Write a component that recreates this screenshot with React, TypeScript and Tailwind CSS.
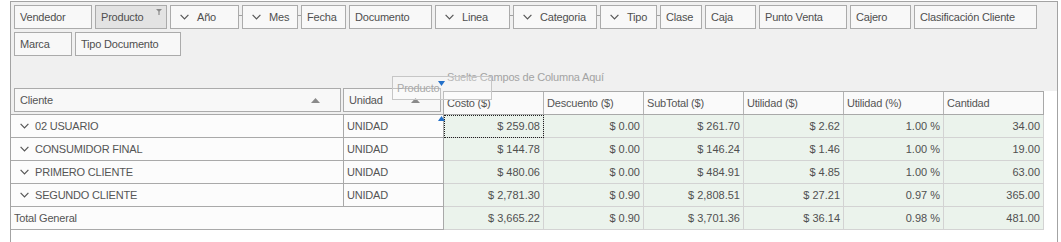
import React from "react";

const Chevron = () => (
  <svg width="9" height="6" viewBox="0 0 9 6" className="shrink-0">
    <path d="M0.6 0.9 L4.5 4.8 L8.4 0.9" fill="none" stroke="#555555" strokeWidth="1.2" />
  </svg>
);

const SortUp = () => (
  <svg width="9" height="5" viewBox="0 0 9 5" className="shrink-0">
    <polygon points="0,5 9,5 4.5,0" fill="#8a8a8a" />
  </svg>
);

type ChipDef = { label: string; cls: string; chev?: boolean; active?: boolean; after?: "sp" | "conn" | "none" };

const row1: ChipDef[] = [
  { label: "Vendedor", cls: "w-[78px]", after: "sp" },
  { label: "Producto", cls: "w-[72px]", active: true, after: "sp" },
  { label: "Año", cls: "w-[69px]", chev: true, after: "conn" },
  { label: "Mes", cls: "w-[56px]", chev: true, after: "conn" },
  { label: "Fecha", cls: "w-[45px]", after: "sp" },
  { label: "Documento", cls: "w-[83px]", after: "sp" },
  { label: "Linea", cls: "w-[75px]", chev: true, after: "conn" },
  { label: "Categoria", cls: "w-[84px]", chev: true, after: "conn" },
  { label: "Tipo", cls: "w-[57px]", chev: true, after: "conn" },
  { label: "Clase", cls: "w-[42px]", after: "sp" },
  { label: "Caja", cls: "w-[51px]", after: "sp" },
  { label: "Punto Venta", cls: "w-[88px]", after: "sp" },
  { label: "Cajero", cls: "w-[61px]", after: "sp" },
  { label: "Clasificación Cliente", cls: "w-[123px]", after: "none" },
];

const row2: ChipDef[] = [
  { label: "Marca", cls: "w-[58px]", after: "sp" },
  { label: "Tipo Documento", cls: "w-[106px]", after: "none" },
];

function Chip({ c }: { c: ChipDef }) {
  return (
    <>
      <div
        className={
          "relative h-[24px] shrink-0 border border-[#ababab] flex items-center text-[#4f4f4f] tracking-[-0.2px] " +
          (c.active ? "bg-[#e3e3e3] " : "bg-[#f8f8f8] ") +
          (c.chev ? "pl-[9px] gap-[8px] " : "pl-[5px] ") +
          c.cls
        }
      >
        {c.chev && <Chevron />}
        <span className="whitespace-nowrap">{c.label}</span>
        {c.active && (
          <svg width="6" height="6" viewBox="0 0 6 6" className="absolute top-[3px] right-[4px]">
            <polygon points="0,0 6,0 3.6,2.6 3.6,6 2.4,6 2.4,2.6" fill="#8a8a8a" />
          </svg>
        )}
      </div>
      {c.after === "sp" && <div className="w-[3px] shrink-0" />}
      {c.after === "conn" && (
        <div className="w-[3px] shrink-0 pt-[10px]">
          <div className="h-px bg-[#a0a0a0]" />
        </div>
      )}
    </>
  );
}

const cols = ["Costo ($)", "Descuento ($)", "SubTotal ($)", "Utilidad ($)", "Utilidad (%)", "Cantidad"];

const rows = [
  { name: "02 USUARIO", vals: ["$ 259.08", "$ 0.00", "$ 261.70", "$ 2.62", "1.00 %", "34.00"] },
  { name: "CONSUMIDOR FINAL", vals: ["$ 144.78", "$ 0.00", "$ 146.24", "$ 1.46", "1.00 %", "19.00"] },
  { name: "PRIMERO CLIENTE", vals: ["$ 480.06", "$ 0.00", "$ 484.91", "$ 4.85", "1.00 %", "63.00"] },
  { name: "SEGUNDO CLIENTE", vals: ["$ 2,781.30", "$ 0.90", "$ 2,808.51", "$ 27.21", "0.97 %", "365.00"] },
];
const totals = ["$ 3,665.22", "$ 0.90", "$ 3,701.36", "$ 36.14", "0.98 %", "481.00"];

function DataCells({ vals, focusFirst }: { vals: string[]; focusFirst?: boolean }) {
  return (
    <>
      {vals.map((v, i) => (
        <div
          key={i}
          className={
            "w-[100px] shrink-0 border-r border-b border-[#d3d3d3] bg-[#ebf3ec] flex items-center justify-end pr-[3px] text-[#505050] " +
            (focusFirst && i === 0 ? "outline outline-1 outline-dotted outline-[#202020] -outline-offset-1" : "")
          }
        >
          {v}
        </div>
      ))}
    </>
  );
}

export default function App() {
  return (
    <div className="h-[242px] overflow-hidden bg-white pl-[10px] pt-[1px] font-['Liberation_Sans',Arial,sans-serif] text-[11px] leading-[13px]">
      <div className="relative w-[1048px] h-[260px] border-l border-t border-r border-[#a3a3a3] bg-white">
        {/* filter area */}
        <div className="bg-[#f0f0f0] pl-[3px] pt-[3px] flex flex-col gap-[3px]">
          <div className="flex">
            {row1.map((c) => (
              <Chip key={c.label} c={c} />
            ))}
          </div>
          <div className="flex">
            {row2.map((c) => (
              <Chip key={c.label} c={c} />
            ))}
          </div>
        </div>

        {/* header row */}
        <div className="flex h-[59px]">
          <div className="w-[432px] shrink-0 bg-[#f0f0f0] border-b border-[#a9a9a9] flex items-end pl-[3px] pb-[2px] gap-[2px]">
            <div className="w-[327px] h-[24px] border border-[#ababab] bg-[#f8f8f8] flex items-center justify-between pl-[5px] pr-[20px] text-[#555555] tracking-[-0.2px]">
              <span>Cliente</span>
              <SortUp />
            </div>
            <div className="w-[98px] h-[24px] border border-[#ababab] bg-[#f8f8f8] flex items-center justify-between pl-[5px] pr-[20px] text-[#555555] tracking-[-0.2px]">
              <span>Unidad</span>
              <SortUp />
            </div>
          </div>
          <div className="w-[601px] shrink-0 flex flex-col">
            <div className="h-[35px] bg-[#f0f0f0] pl-[4px] pt-[15px] text-[#a3a3a3] tracking-[-0.2px] whitespace-nowrap">
              Suelte Campos de Columna Aquí
            </div>
            <div className="flex h-[24px] border-t border-b border-l border-[#a9a9a9] bg-[#fafafa]">
              {cols.map((c) => (
                <div
                  key={c}
                  className="w-[100px] shrink-0 border-r border-[#b4b4b4] last:border-[#a9a9a9] flex items-center pl-[3px] text-[#555555] tracking-[-0.2px] whitespace-nowrap"
                >
                  {c}
                </div>
              ))}
            </div>
          </div>
          <div className="flex-1">
            <div className="h-[35px] bg-[#f0f0f0]" />
          </div>
        </div>

        {/* rows */}
        {rows.map((r, idx) => (
          <div key={r.name} className="flex h-[23px]">
            <div className="w-[333px] shrink-0 border-r border-b border-[#a9a9a9] bg-[#fcfcfc] flex items-center pl-[9px] gap-[6px] text-[#555555] tracking-[-0.2px] whitespace-nowrap">
              <Chevron />
              <span>{r.name}</span>
            </div>
            <div className="w-[100px] shrink-0 border-r border-b border-[#a9a9a9] bg-[#fcfcfc] flex items-center pl-[3px] text-[#555555] tracking-[-0.2px]">
              UNIDAD
            </div>
            <DataCells vals={r.vals} focusFirst={idx === 0} />
          </div>
        ))}
        <div className="flex h-[23px]">
          <div className="w-[433px] shrink-0 border-r border-b border-[#a9a9a9] bg-[#fcfcfc] flex items-center pl-[3px] text-[#555555] tracking-[-0.2px]">
            Total General
          </div>
          <DataCells vals={totals} />
        </div>

        {/* drag overlay */}
        <div className="absolute left-[381px] top-[74px] w-[100px] h-[24px] border border-[#c6c6c6] bg-white/25 flex items-center pl-[4px] text-[#a8a8a8] tracking-[-0.2px]">
          Producto
        </div>
        <svg width="7" height="5" viewBox="0 0 7 5" className="absolute left-[427px] top-[79px]">
          <polygon points="0,0 7,0 3.5,5" fill="#2370c9" />
        </svg>
        <svg width="7" height="5" viewBox="0 0 7 5" className="absolute left-[427px] top-[114px]">
          <polygon points="0,5 7,5 3.5,0" fill="#2370c9" />
        </svg>
      </div>
    </div>
  );
}
